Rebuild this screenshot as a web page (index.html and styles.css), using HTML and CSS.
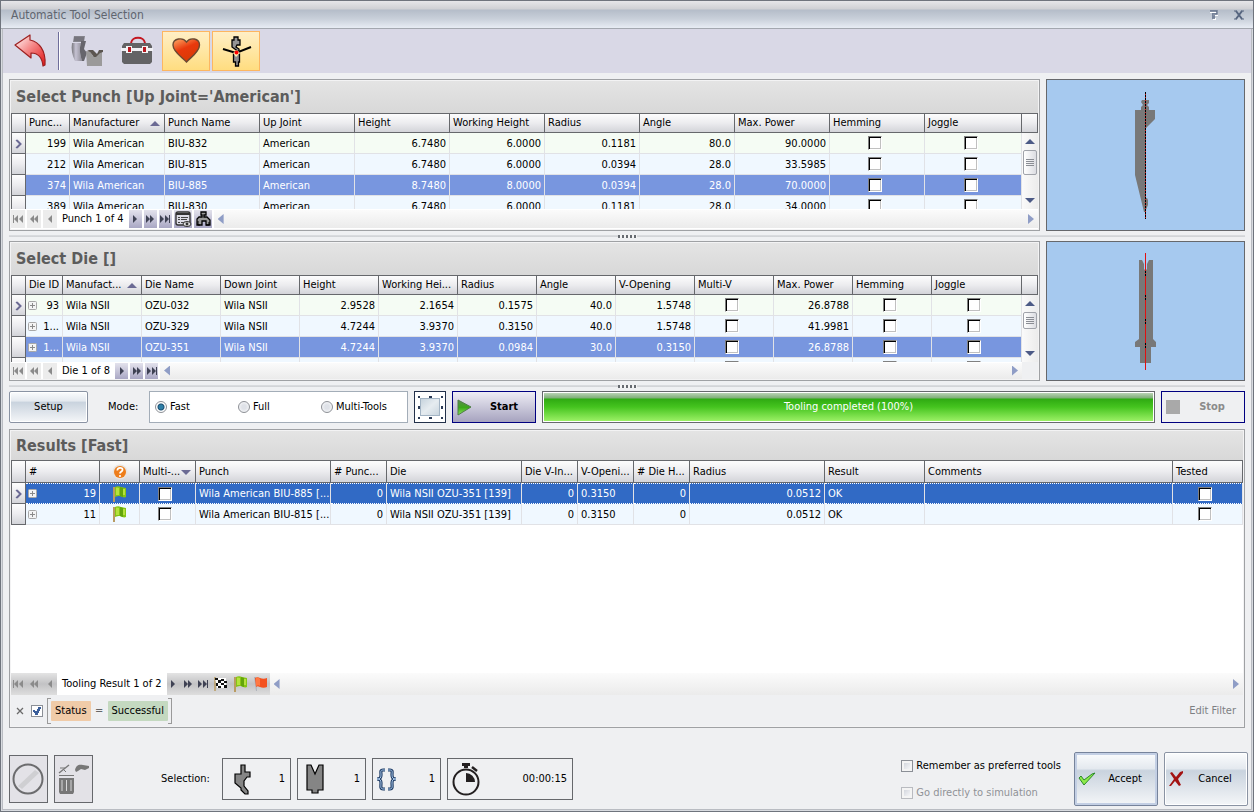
FILE: index.html
```
<!DOCTYPE html>
<html lang="en">
<head>
  <meta charset="UTF-8">
  <meta name="viewport" content="width=device-width, initial-scale=1.0">
  <title>Automatic Tool Selection</title>
  <link rel="stylesheet" href="styles.css">
</head>
<body>
  <!-- Shared icons -->
  <svg class="sprite" aria-hidden="true">
    <symbol id="i-first" viewBox="0 0 12 10"><path d="M1 1h1v8H1zM6 1v8L2 5zM11 1v8L7 5z"/></symbol>
    <symbol id="i-rew" viewBox="0 0 12 10"><path d="M6 1v8L2 5zM10 1v8L6 5z"/></symbol>
    <symbol id="i-prev" viewBox="0 0 12 10"><path d="M8 1v8L4 5z"/></symbol>
    <symbol id="i-next" viewBox="0 0 12 10"><path d="M4 1v8l4-4z"/></symbol>
    <symbol id="i-fwd" viewBox="0 0 12 10"><path d="M2 1v8l4-4zM6 1v8l4-4z"/></symbol>
    <symbol id="i-last" viewBox="0 0 12 10"><path d="M1 1v8l4-4zM6 1v8l4-4zM10 1h1v8h-1z"/></symbol>
    <symbol id="i-plus" viewBox="0 0 9 9"><rect x=".5" y=".5" width="8" height="8" rx="1" fill="#f4f4f4" stroke="#a8a8a8"/><path d="M4 2h1v2h2v1H5v2H4V5H2V4h2z" fill="#8a8a8a"/></symbol>
    <symbol id="i-mark" viewBox="0 0 8 10"><path d="M1 1l4 4-4 4M2 1l4 4-4 4" fill="none" stroke="#6b6a94" stroke-width="1.3"/></symbol>
    <symbol id="i-flag" viewBox="0 0 16 16"><path d="M1 1h2v15H1z" fill="#b99b62"/><path d="M3 1c2-1 4-1 6 0l5 1v9c-2 1-4 0-6-1-2 0-3 0-5 1z" fill="#86c415"/><path d="M4 2c1-1 2 0 3 0v7H4zM10 3l3 0v6h-3z" fill="#b5e23c"/><path d="M8 1v9l3 1V2z" fill="#63a50a"/></symbol>
    <symbol id="i-redflag" viewBox="0 0 16 16"><path d="M1 1h2l1 14H3z" fill="#b0b4bc"/><path d="M2 2c2-1 3-1 5 0s5 1 7 0v9c-2 1-5 1-7 0s-3-1-4 0z" fill="#f4511e"/><path d="M3 2c2-1 3 0 4 1v7c-1-1-2-1-4 0z" fill="#ff7843"/></symbol>
  </svg>

  <div class="dialog">
    <header class="titlebar">
      <h1>Automatic Tool Selection</h1>
      <button class="title-btn" aria-label="Help"><svg width="9" height="10" viewBox="0 0 9 10"><path d="M1 2h7v3H4M4 9h3" fill="none" stroke="#fff" stroke-width="2"/><path d="M1 1h7v3H3M3 6h3M3 8h3" fill="none" stroke="#5d6c86" stroke-width="1.5"/></svg></button>
      <button class="title-btn" aria-label="Close"><svg width="10" height="10" viewBox="0 0 10 10"><path d="M0 1h3M7 1h3M0 9h3M7 9h3" stroke="#56657f"/><path d="M2 1l6 8M8 1L2 9" fill="none" stroke="#56657f" stroke-width="2"/></svg></button>
    </header>

    <div class="toolbar">
      <button class="tool" aria-label="Back">
        <svg width="34" height="34" viewBox="0 0 34 34"><defs><linearGradient id="gRed" x1="0" y1="0" x2="1" y2="1"><stop offset="0" stop-color="#fff"/><stop offset=".45" stop-color="#f58a8a"/><stop offset="1" stop-color="#e01313"/></linearGradient></defs><path d="M2 11L17 1v5c9 2 16 10 15 25l-2 1c-1-9-5-13-12-13v5z" fill="url(#gRed)" stroke="#9c2020" stroke-width="1.2" stroke-linejoin="round"/></svg>
      </button>
      <span class="tool-sep"></span>
      <button class="tool" aria-label="Tools">
        <svg width="34" height="34" viewBox="0 0 34 34"><defs><linearGradient id="gSteel" x1="0" y1="0" x2="1" y2="0"><stop offset="0" stop-color="#77767c"/><stop offset=".4" stop-color="#c5c2d2"/><stop offset="1" stop-color="#8e8c96"/></linearGradient></defs><path d="M5 2h11l-1 6h-11z" fill="#85848c"/><path d="M5 4h10M5 6h10" stroke="#6a6970"/><path d="M3 9h9c-2 6-1 11 1 18H6C3 21 2 15 3 9z" fill="url(#gSteel)"/><path d="M12 7h5l-2 8 3 4-3 8h-2c-2-7-3-12-1-18z" fill="#66656c"/><path d="M17 17l4 1 3 4h3l4-4h2v14H18z" fill="#9b9a9a"/><path d="M18 17l2-1h4l4 4 2-4h4v2l-3 1-4 4h-2l-4-5z" fill="#5b5550"/></svg>
      </button>
      <button class="tool" aria-label="Toolbox">
        <svg width="34" height="34" viewBox="0 0 34 34"><path d="M12 9c1-7 13-7 14 0" fill="none" stroke="#c41720" stroke-width="2"/><path d="M5 9h26l2 3v16l-2 2H5l-2-2V12z" fill="#636365"/><path d="M2 14h32v3H2z" fill="#f0f0f4"/><path d="M7 12h6v7H7zM23 12h6v7h-6z" fill="#f4f4f4"/><path d="M9 13h3v5H9zM24 13h3v5h-3z" fill="#b71920"/></svg>
      </button>
      <button class="tool active" aria-label="Preferred" aria-pressed="true">
        <svg width="34" height="34" viewBox="0 0 34 34"><defs><linearGradient id="gHeart" x1="0" y1="0" x2=".5" y2="1"><stop offset="0" stop-color="#ffad68"/><stop offset=".5" stop-color="#e8390d"/><stop offset="1" stop-color="#d93a05"/></linearGradient></defs><path d="M17.500 28C13 23 4 18 4 11 4 4 14 3 17.500 8c3.500-5 13-4 13 3 0 7-8.500 12-13 17z" fill="url(#gHeart)" stroke="#6c4a32" stroke-width="1.400"/></svg>
      </button>
      <button class="tool active" aria-label="Bend simulation" aria-pressed="true">
        <svg width="34" height="34" viewBox="0 0 34 34"><path d="M15 3h4v3h2v5h-3l-1 2 3 2v3l-7-5V6h2z" fill="#949494" stroke="#000" stroke-width="1.300"/><path d="M14.500 20h6v8h-1v4h-3v-4h-2z" fill="#8c8c8c" stroke="#000" stroke-width="1.300"/><path d="M4 15l13 4 15-6" fill="none" stroke="#000" stroke-width="2"/><path d="M14 19l3 4 4-4-3-3z" fill="#fff0b0"/><circle cx="17.500" cy="18.500" r="2" fill="#f00"/></svg>
      </button>
    </div>

    <main class="content">
      <div class="split-row">
        <section class="panel">
          <h2 class="caption">Select Punch [Up Joint='American']</h2>
          <div class="grid grid-punch">
            <div class="grid-clip">
              <table class="data punch-table">
                <thead>
                  <tr><th></th><th>Punc...</th><th>Manufacturer<i class="sort-asc"></i></th><th>Punch Name</th><th>Up Joint</th><th>Height</th><th>Working Height</th><th>Radius</th><th>Angle</th><th>Max. Power</th><th>Hemming</th><th>Joggle</th></tr>
                </thead>
                <tbody>
                  <tr class="current"><td><svg width="8" height="10"><use href="#i-mark"/></svg></td><td class="num">199</td><td>Wila American</td><td>BIU-832</td><td>American</td><td class="num">6.7480</td><td class="num">6.0000</td><td class="num">0.1181</td><td class="num">80.0</td><td class="num">90.0000</td><td class="chk"><input type="checkbox" aria-label="Hemming"></td><td class="chk"><input type="checkbox" aria-label="Joggle"></td></tr>
                  <tr><td></td><td class="num">212</td><td>Wila American</td><td>BIU-815</td><td>American</td><td class="num">6.7480</td><td class="num">6.0000</td><td class="num">0.0394</td><td class="num">28.0</td><td class="num">33.5985</td><td class="chk"><input type="checkbox" aria-label="Hemming"></td><td class="chk"><input type="checkbox" aria-label="Joggle"></td></tr>
                  <tr class="picked"><td></td><td class="num">374</td><td>Wila American</td><td>BIU-885</td><td>American</td><td class="num">8.7480</td><td class="num">8.0000</td><td class="num">0.0394</td><td class="num">28.0</td><td class="num">70.0000</td><td class="chk"><input type="checkbox" aria-label="Hemming"></td><td class="chk"><input type="checkbox" aria-label="Joggle"></td></tr>
                  <tr><td></td><td class="num">389</td><td>Wila American</td><td>BIU-830</td><td>American</td><td class="num">6.7480</td><td class="num">6.0000</td><td class="num">0.1181</td><td class="num">28.0</td><td class="num">34.0000</td><td class="chk"><input type="checkbox" aria-label="Hemming"></td><td class="chk"><input type="checkbox" aria-label="Joggle"></td></tr>
                </tbody>
              </table>
            </div>
            <div class="vscroll">
              <div class="vscroll-head"></div>
              <button class="arrow-up" aria-label="Scroll up"></button>
              <div class="thumb thumb-lg"></div>
              <button class="arrow-down" aria-label="Scroll down"></button>
            </div>
          </div>
          <div class="pager">
            <button class="nav off" aria-label="First" disabled><svg width="12" height="10"><use href="#i-first"/></svg></button>
            <button class="nav off" aria-label="Previous page" disabled><svg width="12" height="10"><use href="#i-rew"/></svg></button>
            <button class="nav off" aria-label="Previous" disabled><svg width="12" height="10"><use href="#i-prev"/></svg></button>
            <span class="pager-text">Punch 1 of 4</span>
            <button class="nav" aria-label="Next"><svg width="12" height="10"><use href="#i-next"/></svg></button>
            <button class="nav" aria-label="Next page"><svg width="12" height="10"><use href="#i-fwd"/></svg></button>
            <button class="nav" aria-label="Last"><svg width="12" height="10"><use href="#i-last"/></svg></button>
            <button class="nav wide" aria-label="View list"><svg width="18" height="18" viewBox="0 0 18 18"><rect x="2" y="2" width="14" height="13" rx="2" fill="#dcdce6" stroke="#333" stroke-width="1.4"/><path d="M2 3h14v2H2z" fill="#333"/><path d="M4 7.500h2M4 9.500h2M4 12.500h2M7 7.500h7M7 9.500h6M7 12.500h3" stroke="#444"/><ellipse cx="13" cy="14" rx="4" ry="2.500" fill="#ddd" stroke="#333"/><circle cx="13" cy="14" r="1.400" fill="#333"/></svg></button>
            <button class="nav wide" aria-label="Open tool"><svg width="18" height="18" viewBox="0 0 18 18"><path d="M7 2h5v3h-2v2h3l3 3v5h-4v-4H8v4H3V9l2-2h3V5H7z" fill="#9a9a9a" stroke="#000" stroke-width="1.300"/><path d="M6 15h-2v-4M12 15h3v-3" fill="none" stroke="#000"/></svg></button>
            <div class="hscroll"><button class="arrow-left" aria-label="Scroll left"></button><button class="arrow-right" aria-label="Scroll right"></button></div>
          </div>
        </section>
        <div class="preview">
          <svg width="198" height="150" viewBox="0 0 198 150" role="img" aria-label="Punch profile"><path d="M95 20h7v3l-2 2 2 2v3h6v9l-9 9v70h1l1 2v5l-3 7h-1l-9-37V30h6v-3l2-2-2-3z" fill="#787878"/><path d="M98.500 12v127" stroke="#d02020"/><path d="M98.500 12v127" stroke="#000" stroke-dasharray="2 1"/></svg>
        </div>
      </div>

      <div class="splitter"></div>

      <div class="split-row">
        <section class="panel">
          <h2 class="caption">Select Die []</h2>
          <div class="grid grid-die">
            <div class="grid-clip">
              <table class="data die-table">
                <thead>
                  <tr><th></th><th>Die ID</th><th>Manufact...<i class="sort-asc"></i></th><th>Die Name</th><th>Down Joint</th><th>Height</th><th>Working Hei...</th><th>Radius</th><th>Angle</th><th>V-Opening</th><th>Multi-V</th><th>Max. Power</th><th>Hemming</th><th>Joggle</th></tr>
                </thead>
                <tbody>
                  <tr class="current"><td><svg width="8" height="10"><use href="#i-mark"/></svg></td><td class="num"><svg class="plus" width="9" height="9"><use href="#i-plus"/></svg>93</td><td>Wila NSII</td><td>OZU-032</td><td>Wila NSII</td><td class="num">2.9528</td><td class="num">2.1654</td><td class="num">0.1575</td><td class="num">40.0</td><td class="num">1.5748</td><td class="chk"><input type="checkbox" aria-label="Multi-V"></td><td class="num">26.8788</td><td class="chk"><input type="checkbox" aria-label="Hemming"></td><td class="chk"><input type="checkbox" aria-label="Joggle"></td></tr>
                  <tr><td></td><td class="num"><svg class="plus" width="9" height="9"><use href="#i-plus"/></svg>1...</td><td>Wila NSII</td><td>OZU-329</td><td>Wila NSII</td><td class="num">4.7244</td><td class="num">3.9370</td><td class="num">0.3150</td><td class="num">40.0</td><td class="num">1.5748</td><td class="chk"><input type="checkbox" aria-label="Multi-V"></td><td class="num">41.9981</td><td class="chk"><input type="checkbox" aria-label="Hemming"></td><td class="chk"><input type="checkbox" aria-label="Joggle"></td></tr>
                  <tr class="picked"><td></td><td class="num"><svg class="plus" width="9" height="9"><use href="#i-plus"/></svg>1...</td><td>Wila NSII</td><td>OZU-351</td><td>Wila NSII</td><td class="num">4.7244</td><td class="num">3.9370</td><td class="num">0.0984</td><td class="num">30.0</td><td class="num">0.3150</td><td class="chk"><input type="checkbox" aria-label="Multi-V"></td><td class="num">26.8788</td><td class="chk"><input type="checkbox" aria-label="Hemming"></td><td class="chk"><input type="checkbox" aria-label="Joggle"></td></tr>
                  <tr><td></td><td></td><td></td><td></td><td></td><td></td><td></td><td></td><td></td><td></td><td class="chk"><input type="checkbox" aria-label="Multi-V"></td><td></td><td class="chk"><input type="checkbox" aria-label="Hemming"></td><td class="chk"><input type="checkbox" aria-label="Joggle"></td></tr>
                </tbody>
              </table>
            </div>
            <div class="vscroll">
              <div class="vscroll-head"></div>
              <button class="arrow-up" aria-label="Scroll up"></button>
              <div class="thumb"></div>
              <button class="arrow-down" aria-label="Scroll down"></button>
            </div>
          </div>
          <div class="pager pager-die">
            <button class="nav off" aria-label="First" disabled><svg width="12" height="10"><use href="#i-first"/></svg></button>
            <button class="nav off" aria-label="Previous page" disabled><svg width="12" height="10"><use href="#i-rew"/></svg></button>
            <button class="nav off" aria-label="Previous" disabled><svg width="12" height="10"><use href="#i-prev"/></svg></button>
            <span class="pager-text">Die 1 of 8</span>
            <button class="nav" aria-label="Next"><svg width="12" height="10"><use href="#i-next"/></svg></button>
            <button class="nav" aria-label="Next page"><svg width="12" height="10"><use href="#i-fwd"/></svg></button>
            <button class="nav" aria-label="Last"><svg width="12" height="10"><use href="#i-last"/></svg></button>
            <div class="hscroll"><button class="arrow-left" aria-label="Scroll left"></button><button class="arrow-right" aria-label="Scroll right"></button></div>
            <span class="scroll-corner"></span>
          </div>
        </section>
        <div class="preview">
          <svg width="198" height="138" viewBox="0 0 198 138" role="img" aria-label="Die profile"><path d="M92 18h3l2 4v5l1 1h1l1-1v-5l2-4h4v79l3 3v5h-5v16H93v-16h-5v-5l4-3z" fill="#787878"/><path d="M98.500 28v77" stroke="#000" stroke-dasharray="6 18"/><path d="M98.500 11v117" stroke="#e01010"/><path d="M98.500 29v77" stroke="#000" stroke-dasharray="2 1 2 19"/></svg>
        </div>
      </div>

      <div class="splitter"></div>

      <div class="controls">
        <button class="btn setup">Setup</button>
        <span class="mode-label" id="mode-label">Mode:</span>
        <div class="modes" role="radiogroup" aria-labelledby="mode-label">
          <label><input type="radio" name="mode" checked>Fast</label>
          <label><input type="radio" name="mode">Full</label>
          <label><input type="radio" name="mode">Multi-Tools</label>
        </div>
        <button class="select-area" aria-label="Select area"><svg width="30" height="30" viewBox="0 0 30 30"><defs><linearGradient id="gArea" x1="0" y1="0" x2="1" y2="1"><stop offset="0" stop-color="#c5d2dc"/><stop offset=".5" stop-color="#e6ecf0"/><stop offset="1" stop-color="#c9d5de"/></linearGradient></defs><rect x="5.500" y="6.500" width="19" height="17" fill="url(#gArea)" stroke="#a3b4c4"/><path d="M3 4h2v2H3zM14 4h3v2h-3zM26 4h2v2h-2zM3 14h2v3H3zM26 14h2v3h-2zM3 25h2v2H3zM14 25h3v2h-3zM26 25h2v2h-2z" fill="#2b3a55"/></svg></button>
        <button class="start"><svg width="16" height="17" viewBox="0 0 16 17"><defs><linearGradient id="gPlay" x1="0" y1="0" x2="0" y2="1"><stop offset="0" stop-color="#5f8a55"/><stop offset=".5" stop-color="#3ba81a"/><stop offset="1" stop-color="#8be85a"/></linearGradient></defs><path d="M1 1l13 7L1 16z" fill="url(#gPlay)" stroke="#4f7d48"/></svg><span>Start</span></button>
        <div class="progress" role="progressbar" aria-valuenow="100" aria-valuemin="0" aria-valuemax="100">
          <div class="progress-bar" style="width: 100%">Tooling completed (100%)</div>
        </div>
        <button class="stop" disabled><i></i><span>Stop</span></button>
      </div>

      <section class="panel results">
        <h2 class="caption">Results [Fast]</h2>
        <div class="grid grid-results">
          <table class="data results-table">
            <thead>
              <tr><th></th><th>#</th><th class="mid"><svg width="16" height="16" viewBox="0 0 16 16"><circle cx="8" cy="8" r="7.500" fill="#e8e4e0"/><circle cx="8" cy="8" r="6" fill="#ee7d1b"/><path d="M5.500 6.500C5 3 11 3 10.500 6c0 1.500-2.500 1.500-2.500 3.500" fill="none" stroke="#fff" stroke-width="1.800"/><circle cx="8" cy="12" r="1.100" fill="#fff"/></svg></th><th>Multi-...<i class="sort-desc"></i></th><th>Punch</th><th># Punc...</th><th>Die</th><th>Die V-In...</th><th>V-Openi...</th><th># Die H...</th><th>Radius</th><th>Result</th><th>Comments</th><th>Tested</th></tr>
            </thead>
            <tbody>
              <tr class="selected"><td><svg width="8" height="10"><use href="#i-mark"/></svg></td><td class="num"><svg class="plus" width="9" height="9"><use href="#i-plus"/></svg>19</td><td class="mid"><svg width="16" height="16"><use href="#i-flag"/></svg></td><td class="chk"><input type="checkbox" aria-label="Multi-V"></td><td>Wila American BIU-885 [...</td><td class="num">0</td><td>Wila NSII OZU-351 [139]</td><td class="num">0</td><td>0.3150</td><td class="num">0</td><td class="num">0.0512</td><td>OK</td><td></td><td class="chk"><input type="checkbox" aria-label="Tested"></td></tr>
              <tr><td></td><td class="num"><svg class="plus" width="9" height="9"><use href="#i-plus"/></svg>11</td><td class="mid"><svg width="16" height="16"><use href="#i-flag"/></svg></td><td class="chk"><input type="checkbox" aria-label="Multi-V"></td><td>Wila American BIU-815 [...</td><td class="num">0</td><td>Wila NSII OZU-351 [139]</td><td class="num">0</td><td>0.3150</td><td class="num">0</td><td class="num">0.0512</td><td>OK</td><td></td><td class="chk"><input type="checkbox" aria-label="Tested"></td></tr>
            </tbody>
          </table>
        </div>
        <div class="pager pager-results">
          <div class="nav-group">
            <button class="nav off" aria-label="First" disabled><svg width="12" height="10"><use href="#i-first"/></svg></button>
            <button class="nav off" aria-label="Previous page" disabled><svg width="12" height="10"><use href="#i-rew"/></svg></button>
            <button class="nav off" aria-label="Previous" disabled><svg width="12" height="10"><use href="#i-prev"/></svg></button>
          </div>
          <span class="pager-text">Tooling Result 1 of 2</span>
          <div class="nav-group">
            <button class="nav" aria-label="Next"><svg width="12" height="10"><use href="#i-next"/></svg></button>
            <button class="nav" aria-label="Next page"><svg width="12" height="10"><use href="#i-fwd"/></svg></button>
            <button class="nav" aria-label="Last"><svg width="12" height="10"><use href="#i-last"/></svg></button>
            <button class="nav wide" aria-label="Finish"><svg width="16" height="16" viewBox="0 0 16 16"><path d="M2 1v14" stroke="#b99b62" stroke-width="1.500"/><path d="M2 2h11v10H4z" fill="#fff"/><path d="M2 2h3v2H2zM8 3h3v2H8zM5 4h3v3H5zM11 5h3v2h-3zM3 7h2v3H3zM8 7h3v2H8zM5 10h3v2H5zM11 9h3v3h-3z" fill="#111"/></svg></button>
            <button class="nav wide" aria-label="Mark good"><svg width="16" height="16"><use href="#i-flag"/></svg></button>
            <button class="nav wide" aria-label="Mark bad"><svg width="16" height="16"><use href="#i-redflag"/></svg></button>
          </div>
          <div class="hscroll"><button class="arrow-left" aria-label="Scroll left"></button><button class="arrow-right" aria-label="Scroll right"></button></div>
        </div>
        <div class="filter">
          <button class="filter-close" aria-label="Clear filter"><svg width="8" height="8" viewBox="0 0 8 8"><path d="M1 1l6 6M7 1L1 7" stroke="#6a6a6a" stroke-width="1.300"/></svg></button>
          <input type="checkbox" class="soft-check" aria-label="Filter enabled" checked>
          <span class="bracket open"></span>
          <span class="chip status">Status</span>
          <span class="eq">=</span>
          <span class="chip success">Successful</span>
          <span class="bracket close"></span>
          <a href="#" class="edit-filter">Edit Filter</a>
        </div>
      </section>
    </main>

    <footer class="footer">
      <button class="square" aria-label="No selection"><svg width="36" height="36" viewBox="0 0 36 36"><path d="M8 25L25 9l4 3-17 16z" fill="#cfcfd2"/><circle cx="18" cy="18" r="14.500" fill="none" stroke="#6c6c6e" stroke-width="2"/></svg></button>
      <button class="square" aria-label="Delete"><svg width="36" height="36" viewBox="0 0 36 36"><path d="M4 14h15v1H4z" fill="#777"/><path d="M4 17h15v14l-1 2H5l-1-2z" fill="#777"/><path d="M7 19v11M11.500 19v11M16 19v11" stroke="#d8d8da"/><path d="M4 12L14 4" stroke="#777" stroke-width="1.500"/><path d="M5 7h5M9 9l2 2" stroke="#777"/><path d="M20 9c1-5 4-6 8-5l6 1v2l-4 2-4-1-3 2-2 1z" fill="#777"/></svg></button>
      <span class="selection-label">Selection:</span>
      <div class="counter">
        <svg width="32" height="34" viewBox="0 0 32 34"><path d="M16 3h4v7h5v5h-3l-3 4v5l4 5v3h-3l-4-4v-2l-6-5V12h6z" fill="#858585" stroke="#000" stroke-width="1.200"/></svg><span>1</span>
      </div>
      <div class="counter">
        <svg width="32" height="34" viewBox="0 0 32 34"><path d="M7 3h4l4 9 4-9h4v25h-5v3h-6v-3H7z" fill="#858585" stroke="#000" stroke-width="1.200"/></svg><span>1</span>
      </div>
      <div class="counter">
        <svg width="32" height="34" viewBox="0 0 32 34"><g fill="none"><path id="braces" d="M10 8H8c-3 0-2 2-2 5 0 3-1 4-4 4 3 0 4 1 4 4 0 3-1 6 2 6h2M13 8h2c3 0 2 2 2 5 0 3 1 4 4 4-3 0-4 1-4 4 0 3 1 6-2 6h-2" stroke="#1d3a63" stroke-width="3.200"/><path d="M10 8H8c-3 0-2 2-2 5 0 3-1 4-4 4 3 0 4 1 4 4 0 3-1 6 2 6h2M13 8h2c3 0 2 2 2 5 0 3 1 4 4 4-3 0-4 1-4 4 0 3 1 6-2 6h-2" stroke="#a9c9ec"/></g></svg><span>1</span>
      </div>
      <div class="counter timer">
        <svg width="32" height="34" viewBox="0 0 32 34"><circle cx="16" cy="20" r="12.500" fill="none" stroke="#231f20" stroke-width="2"/><path d="M16 11a9 9 0 0 1 9 9h-9zM12 1h8v3h-2v2h-4V4h-2z" fill="#231f20"/><path d="M22 5l5 4" stroke="#231f20" stroke-width="2.500"/></svg><span>00:00:15</span>
      </div>
      <div class="options">
        <label><input type="checkbox" class="soft-check">Remember as preferred tools</label>
        <label class="disabled"><input type="checkbox" class="soft-check" disabled>Go directly to simulation</label>
      </div>
      <button class="btn big default"><svg width="18" height="18" viewBox="0 0 18 18"><path d="M1 8l5 7L17 3l-3 1-8 6-3-4z" fill="#8eea4a" stroke="#2c8a2c"/></svg><span>Accept</span></button>
      <button class="btn big"><svg width="18" height="18" viewBox="0 0 18 18"><path d="M2 3l2-1 4 5 4-5 3-1v2l-5 6 3 6-2 1-4-5-4 5H1l5-7z" fill="#a31212"/></svg><span>Cancel</span></button>
    </footer>
  </div>
</body>
</html>
```
FILE: styles.css
```
:root {
  --bg: #eff0f2;
  --line: #9fa1a4;
  --dark-line: #66686c;
  --cell-line: #e1e2e6;
  --head: linear-gradient(#fdfdfd, #ececef 50%, #d3d4d9);
  --steel: linear-gradient(#fbfcfd, #e4e9ef 30%, #c9d3de 34%, #dde3ea 65%, #f4f6f8);
}

* {
  margin: 0;
  padding: 0;
  box-sizing: border-box;
}

body {
  font-family: "DejaVu Sans Condensed", "DejaVu Sans", Tahoma, sans-serif;
  font-size: 11px;
  line-height: 14px;
  color: #000;
  background: var(--bg);
}

button {
  font: inherit;
  color: inherit;
  background: none;
  border: none;
}

svg {
  display: block;
  flex: none;
}

.sprite {
  display: none;
}

.dialog {
  display: flex;
  flex-direction: column;
  min-height: 100vh;
  border: 1px solid #6f747d;
  box-shadow: inset 0 0 0 1px #d8dbe0, inset 0 0 0 2px #b9bcc2;
  padding: 0 2px 5px;
}

/* Title bar */
.titlebar {
  display: flex;
  align-items: center;
  gap: 14px;
  height: 28px;
  margin: 0 -2px;
  padding: 0 8px 0 10px;
  background: linear-gradient(#e6e6e9, #cfd0d4 8px, #b5bdc9 9px, #c9d0da 18px, #e8ecf4);
  border-bottom: 1px solid #a3a7af;
}

.titlebar h1 {
  flex: 1;
  font-size: 12px;
  font-weight: normal;
  color: #60656f;
}

.title-btn {
  width: 11px;
}

/* Toolbar */
.toolbar {
  display: flex;
  align-items: center;
  gap: 2px;
  height: 44px;
  padding: 0 3px;
  background: #d9d8e6;
}

.tool {
  display: flex;
  align-items: center;
  justify-content: center;
  width: 48px;
  height: 40px;
  border: 1px solid transparent;
}

.tool.active {
  border-color: #fdb661;
  background: linear-gradient(#ffefc6, #ffdd80);
}

.tool-sep {
  width: 2px;
  height: 38px;
  margin: 0 0 0 2px;
  background: #6e6d9a;
  border-right: 1px solid #fff;
}

/* Panels */
.content {
  flex: 1;
  display: flex;
  flex-direction: column;
  padding: 6px 6px 0;
}

.split-row {
  display: grid;
  grid-template-columns: 1fr 199px;
  gap: 6px;
}

.panel {
  min-width: 0;
  padding: 1px;
  border: 1px solid var(--line);
  background: #f3f3f4;
}

.caption {
  height: 32px;
  padding-left: 5px;
  font-size: 16px;
  line-height: 32px;
  color: #5c5c5c;
  background: linear-gradient(#e4e4e4, #d8d8d8);
}

.preview {
  display: flex;
  justify-content: center;
  border: 1px solid var(--dark-line);
  background: #a6c9ef;
}

.splitter {
  display: flex;
  align-items: center;
  justify-content: center;
  height: 10px;
  background: linear-gradient(transparent 4px, #dcdee1 4px, #cfd1d4 6px, transparent 6px);
}

.splitter::after {
  content: "";
  width: 19px;
  height: 3px;
  background: repeating-linear-gradient(100deg, #666a70 0 2px, #f4f4f4 2px 4px);
}

/* Tables */
.grid {
  display: flex;
  align-items: flex-start;
}

.grid-punch {
  height: 96px;
}

.grid-die {
  height: 87px;
}

.grid-results {
  flex: 1;
  background: #fff;
}

.grid-clip {
  flex: 1;
  min-width: 0;
  height: 100%;
  overflow: hidden;
}

.data {
  width: 100%;
  table-layout: fixed;
  border-collapse: separate;
  border-spacing: 0;
}

.data th {
  height: 20px;
  padding: 0 3px;
  font-weight: normal;
  text-align: left;
  white-space: nowrap;
  overflow: hidden;
  background: var(--head);
  border: solid var(--dark-line);
  border-width: 1px 1px 1px 0;
}

.data td {
  height: 21px;
  padding: 1px 3px 0;
  white-space: nowrap;
  overflow: hidden;
  background: #f0f8ff;
  border: solid var(--cell-line);
  border-width: 0 1px 1px 0;
}

.data th:first-child,
.data td:first-child {
  width: 15px;
  border-left: 1px solid var(--dark-line);
}

.data td:first-child {
  background: var(--head);
  border-right-color: var(--dark-line);
  border-bottom-color: var(--dark-line);
}

.data .current td:not(:first-child) {
  background: #f5fcf4;
}

.data .picked td:not(:first-child) {
  color: #fff;
  background: #7896df;
}

.data .selected td:not(:first-child) {
  color: #fff;
  background: #316ac5;
  border-top: 1px dotted #fff;
  border-bottom: 1px dotted #fff;
}

.data .num {
  text-align: right;
}

.data .chk {
  padding: 0 8px 0 3px;
}

.data .mid {
  padding: 0 3px;
}

.mid svg {
  margin: 0 auto;
}

.plus {
  float: left;
  margin-top: 2px;
  margin-left: -1px;
}

.data input {
  appearance: none;
  display: block;
  width: 14px;
  height: 14px;
  margin: 0 auto;
  background: #fff;
  border: 1px solid;
  border-color: #808080 #fff #fff #808080;
  box-shadow: inset 1px 1px #000, inset -1px -1px #c0c0c0;
}

.sort-asc,
.sort-desc {
  float: right;
  margin: 5px 1px 0 0;
  border: solid transparent;
  border-width: 0 5px;
}

.sort-asc {
  border-bottom: 5px solid #6b6a94;
}

.sort-desc {
  border-top: 5px solid #6b6a94;
}

.punch-table th:nth-child(n+3) {
  width: 95px;
}

.punch-table th:nth-child(2) {
  width: 44px;
}

.die-table th:nth-child(n+3) {
  width: 79px;
}

.die-table th:nth-child(2) {
  width: 37px;
}

.punch-table th:last-child,
.die-table th:last-child {
  width: auto;
}

.results-table th {
  width: 56px;
  height: 23px;
}

.results-table th:nth-child(2) {
  width: 74px;
}

.results-table th:nth-child(3) {
  width: 40px;
}

.results-table th:nth-child(5),
.results-table th:nth-child(7),
.results-table th:nth-child(11) {
  width: 135px;
}

.results-table th:nth-child(12) {
  width: 100px;
}

.results-table th:nth-child(13) {
  width: auto;
}

.results-table th:nth-child(14) {
  width: 70px;
}

/* Scroll bars */
.vscroll {
  display: flex;
  flex-direction: column;
  align-items: center;
  width: 16px;
  height: 100%;
  background: linear-gradient(90deg, #fafafa, #ececec);
}

.vscroll-head {
  align-self: stretch;
  height: 20px;
  background: var(--head);
  border: solid var(--dark-line);
  border-width: 1px 1px 1px 0;
}

.arrow-up,
.arrow-down,
.arrow-left,
.arrow-right {
  width: 10px;
  height: 17px;
  background: #4c5a86;
  clip-path: polygon(0 65%, 50% 35%, 100% 65%);
}

.arrow-down {
  margin-top: auto;
  clip-path: polygon(0 35%, 100% 35%, 50% 65%);
}

.arrow-left,
.arrow-right {
  width: 6px;
  height: 10px;
  background: #8f9dc6;
  clip-path: polygon(100% 0, 100% 100%, 0 50%);
}

.arrow-right {
  clip-path: polygon(0 0, 100% 50%, 0 100%);
}

.thumb {
  width: 14px;
  height: 17px;
  border: 1px solid #a0a3aa;
  border-radius: 2px;
  background:
    repeating-linear-gradient(#8a8d94 0 1px, transparent 1px 2px) center / 8px 7px no-repeat,
    linear-gradient(90deg, #fff, #dcdde2);
}

.thumb-lg {
  height: 25px;
}

/* Pagers */
.pager {
  display: flex;
  align-items: center;
  gap: 2px;
  height: 20px;
  background: #fff;
}

.nav {
  display: flex;
  align-items: center;
  justify-content: center;
  width: 13px;
  height: 18px;
  fill: #3f4254;
  background: linear-gradient(#e3e2ec, #a9a7c4);
}

.nav.off {
  width: 14px;
  fill: #8b8b8b;
  background: #ececec;
}

.nav.wide {
  width: 18px;
}

.pager-text {
  padding: 0 3px;
}

.hscroll {
  flex: 1;
  display: flex;
  align-items: center;
  justify-content: space-between;
  height: 18px;
  padding: 0 4px;
  background: linear-gradient(#fbfbfb, #ebebeb);
}

.pager-die {
  height: 17px;
}

.pager-die .nav,
.pager-die .hscroll {
  height: 16px;
}

.scroll-corner {
  width: 16px;
  height: 17px;
  margin-left: -2px;
  background: var(--bg);
}

.pager-results {
  gap: 0;
  height: 22px;
}

.nav-group {
  display: flex;
  align-items: center;
  gap: 2px;
  height: 22px;
  background: linear-gradient(#e4e4e4, #c2c2c4 50%, #dedede);
}

.pager-results .nav {
  background: none;
}

.pager-results .pager-text {
  padding: 0 5px 0 5px;
}

.pager-results .hscroll {
  height: 22px;
}

/* Controls */
.controls {
  display: flex;
  align-items: stretch;
  gap: 6px;
  height: 32px;
  margin-bottom: 6px;
}

.btn {
  background: var(--steel);
  border: 1px solid #8a93a3;
  border-radius: 2px;
  box-shadow: inset 0 0 0 1px #fff;
}

.setup {
  width: 79px;
}

.mode-label {
  align-self: center;
  width: 49px;
  padding-left: 14px;
}

.modes {
  display: grid;
  grid-template-columns: repeat(3, 83px);
  align-items: center;
  width: 259px;
  padding-left: 5px;
  background: #fff;
  border: 1px solid #a3adb8;
}

.modes label {
  display: flex;
  align-items: center;
  gap: 3px;
  white-space: nowrap;
}

.modes input {
  appearance: none;
  width: 12px;
  height: 12px;
  border: 1px solid #8d9096;
  border-radius: 50%;
  background: radial-gradient(#dfe2e8 30%, #fff);
}

.modes input:checked {
  background: radial-gradient(#2d7ea6 0 2px, #1d4f72 3px, #fff 4px);
}

.select-area {
  width: 32px;
  background: #fff;
  border: 1px solid #22304a;
}

.start,
.stop {
  display: flex;
  align-items: center;
  width: 84px;
  padding-left: 4px;
  font-weight: bold;
  border: 1px solid #000080;
}

.start {
  background: linear-gradient(#eeedf5, #a6a3bf);
}

.start span,
.stop span {
  flex: 1;
  text-align: center;
}

.stop {
  color: #8b8b8b;
}

.stop i {
  width: 14px;
  height: 14px;
  background: #a9a9a9;
}

.progress {
  flex: 1;
  padding: 1px;
  border: 1px solid #66686c;
  background: #fff;
}

.progress-bar {
  height: 28px;
  line-height: 28px;
  color: #fff;
  text-align: center;
  background: linear-gradient(#b9d3b4, #7fae78 5px, #2faa12 6px, #45c41f 14px, #9bf065);
}

/* Results */
.results {
  flex: 1;
  display: flex;
  flex-direction: column;
}

.results .caption {
  height: 29px;
  line-height: 29px;
}

.filter {
  display: flex;
  align-items: center;
  height: 31px;
  padding: 0 7px 0 5px;
  background: var(--bg);
}

.filter .soft-check {
  margin: 0 4px 0 7px;
}

.soft-check {
  appearance: none;
  width: 12px;
  height: 12px;
  border: 1px solid #8b8f96;
  background: linear-gradient(135deg, #c9cdd6, #fff);
  box-shadow: inset 0 0 0 2px #f4f4f4;
}

.soft-check:checked {
  background:
    linear-gradient(45deg, transparent 35%, #3b5f9b 35% 65%, transparent 65%) 1px 4px / 4px 4px no-repeat,
    linear-gradient(-60deg, transparent 35%, #3b5f9b 35% 65%, transparent 65%) 3px 1px / 6px 8px no-repeat,
    #fff;
  box-shadow: none;
}

.soft-check:disabled {
  border-color: #b9bbc0;
}

.bracket {
  width: 4px;
  height: 26px;
  border: 1px solid #9a9a9a;
}

.bracket.open {
  border-right: none;
}

.bracket.close {
  border-left: none;
}

.chip {
  padding: 3px 4px;
  border-radius: 1px;
}

.status {
  background: #f0cba8;
}

.success {
  background: #c4d9c0;
}

.eq {
  width: 17px;
  text-align: center;
  color: #666;
}

.edit-filter {
  margin-left: auto;
  color: #7d7f83;
  text-decoration: none;
}

/* Footer */
.footer {
  display: flex;
  align-items: center;
  gap: 6px;
  margin-top: 24px;
  padding: 0 3px 0 6px;
}

.square {
  width: 39px;
  height: 48px;
  background: #e3e2e7;
  border: 1px solid var(--dark-line);
}

.selection-label {
  width: 117px;
  padding-left: 62px;
}

.counter {
  display: flex;
  align-items: center;
  justify-content: space-between;
  width: 69px;
  height: 42px;
  padding: 0 5px 0 2px;
  border: 1px solid var(--dark-line);
}

.timer {
  width: 126px;
}

.options {
  display: flex;
  flex-direction: column;
  gap: 13px;
  margin-left: auto;
  margin-right: 7px;
}

.options label {
  display: flex;
  align-items: center;
  gap: 3px;
}

.options .disabled {
  color: #8f9297;
}

.big {
  display: flex;
  align-items: center;
  width: 84px;
  height: 54px;
  padding-left: 3px;
}

.big span {
  flex: 1;
  padding-right: 3px;
  text-align: center;
}

.default {
  border-color: #76839b;
  box-shadow: inset 0 0 0 2px #c3cfe4;
}
```
